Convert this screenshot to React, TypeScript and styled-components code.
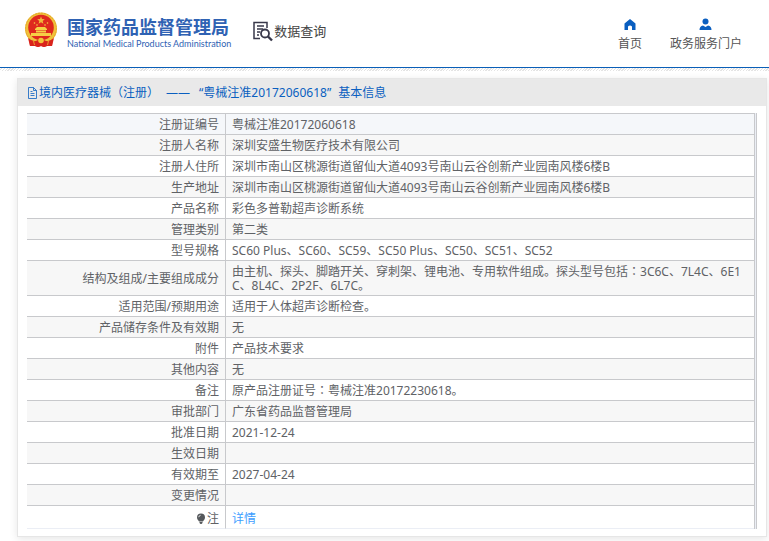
import React from "react";
import styled, { createGlobalStyle } from "styled-components";

const GlobalStyle = createGlobalStyle`
  * { box-sizing: border-box; }
  body {
    margin: 0;
    background: #fff;
    color: #606266;
    font: 12px/14px "Noto Sans", "Noto Sans CJK SC", sans-serif;
  }
`;

const Header = styled.header`
  display: flex;
  align-items: flex-start;
  height: 68px;
  padding: 12px 27px 0 23px;
  border-bottom: 1px solid #0a5fb8;
`;

const Brand = styled.a`
  display: flex;
  gap: 8px;
  color: #2f62b3;
  text-decoration: none;
`;

const BrandText = styled.span`
  display: flex;
  flex-direction: column;
  padding-top: 3px;
  white-space: nowrap;
`;

const BrandName = styled.strong`
  font: 700 18px/22px "Noto Sans CJK SC", sans-serif;
`;

const BrandSub = styled.span`
  font: 400 9px/14px Lato, sans-serif;
`;

const Query = styled.a`
  display: flex;
  align-items: center;
  margin: 8px 0 0 21px;
  color: #444;
  font-size: 13px;
  line-height: 22px;
  text-decoration: none;
  white-space: nowrap;
`;

const Nav = styled.nav`
  display: flex;
  gap: 28px;
  margin: 6px 0 0 auto;
`;

const NavItem = styled.a`
  display: flex;
  flex-direction: column;
  align-items: center;
  gap: 4px;
  color: #555;
  line-height: 18px;
  text-decoration: none;
  white-space: nowrap;
`;

const Hatch = styled.div`
  height: 3px;
  margin-bottom: 7px;
  background: repeating-linear-gradient(135deg, #fff 0 1px, #e4e4e4 1px 2px);
`;

const Panel = styled.main`
  margin: 0 2px 4px 17px;
  border: 1px solid #e6e6e6;
  box-shadow: 0 2px 8px rgba(0, 0, 0, 0.1);
`;

const Title = styled.h1`
  display: flex;
  align-items: center;
  height: 27px;
  margin: 0;
  padding: 0 9px;
  background: #e9e9e9;
  color: #0a5fc0;
  font-size: 12px;
  font-weight: 400;
  white-space: pre;
`;

const TitleParts = styled.span`
  display: flex;
  gap: 7px;
`;

const Dash = styled.span`
  flex: 0 0 26px;
`;

const TableFrame = styled.div`
  margin: 7px 9px;
  padding-right: 1px;
  border-right: 1px solid #c8c9cc;
  background: #ebeef5;
`;

const Table = styled.table`
  width: 100%;
  border-collapse: separate;
  border-spacing: 0;
  border-top: 1px solid #c8c9cc;
  border-right: 1px solid #c8c9cc;
  table-layout: fixed;
`;

const Row = styled.tr`
  background: #fff;
  &:nth-child(even) { background: #f7f7f7; }
  &:first-child { background: #f5f7fa; }
  & > * { border-bottom: 1px solid #c8c9cc; }
  &:last-child > * { height: 23px; padding-top: 5px; border-bottom-color: #ebeef5; }
`;

const Label = styled.th`
  width: 199px;
  height: 21px;
  padding: 4px 6px 2px;
  border-right: 1px solid #c8c9cc;
  font-weight: 400;
  text-align: right;
`;

const Value = styled.td`
  height: 21px;
  padding: 4px 6px 2px;
  word-break: break-all;
`;

const Centered = styled.span`
  font-family: "Noto Sans CJK TC", sans-serif;
  line-height: 0;
`;

const DetailLink = styled.a`
  color: #409eff;
  text-decoration: none;
`;

const NoteLabel = styled.span`
  display: flex;
  align-items: center;
  justify-content: flex-end;
  gap: 1px;
`;

const Emblem = () => (
  <svg width="36" height="38" viewBox="0 0 36 38" aria-hidden="true">
    <path d="M6 25h24l-1 9-5 0-3 1-3-1-3 1-3-1-5 0z" fill="#d9231c" />
    <circle cx="18" cy="16.500" r="16" fill="#f0c03a" />
    <circle cx="18" cy="16.500" r="15.400" fill="none" stroke="#dc9c25" strokeWidth="0.800" strokeDasharray="2 1" />
    <circle cx="18" cy="15.500" r="12.800" fill="#df281e" />
    <path d="M18 4.500l1 2.600 2.800.2-2.100 1.700.7 2.700-2.400-1.500-2.400 1.500.7-2.700-2.100-1.700 2.800-.2z" fill="#f0b83a" />
    <g fill="#f6cf45">
      <circle cx="11.500" cy="11" r="0.800" /><circle cx="24.500" cy="11" r="0.800" />
      <circle cx="14" cy="13" r="0.800" /><circle cx="22" cy="13" r="0.800" />
      <path d="M12 17l2-2h8l2 2v1H12zM13 18.500h10v2H13zM8 21h20v3H8z" />
    </g>
    <path d="M5 26q6 5 10 2l3-1 3 1q4 3 10-2l-2 8-5 0-3 1-3-1-3 1-3-1-5 0z" fill="#d9231c" />
    <circle cx="18" cy="28.500" r="2.800" fill="#f2c53a" />
    <path d="M10.500 29l1 4M25.500 29l-1 4" stroke="#f2b632" strokeWidth="0.800" />
  </svg>
);

const QueryIcon = () => (
  <svg width="22" height="22" viewBox="0 0 22 22" fill="none" stroke="#38384a" aria-hidden="true">
    <path d="M8 18.500H2V2.500h13V8" strokeWidth="1.500" />
    <path d="M5 6h7M5 9h6M5 12h3M5 15h2" strokeWidth="1.300" />
    <circle cx="13" cy="13.500" r="4" strokeWidth="1.800" />
    <path d="M16 16.500l4 4" strokeWidth="2.400" />
  </svg>
);

const HomeIcon = () => (
  <svg width="12" height="13" viewBox="0 0 12 13" fill="#0a5fc0" aria-hidden="true">
    <path d="M6 1L0.500 5.500V12H4V8.500q2-2 4 0V12h3.500V5.500z" />
  </svg>
);

const UserIcon = () => (
  <svg width="13" height="13" viewBox="0 0 13 13" fill="#0a5fc0" aria-hidden="true">
    <circle cx="6.500" cy="3.500" r="3" />
    <path d="M0.500 12q0-4 3.500-4.500L6.500 9 9 7.500Q12.500 8 12.500 12z" />
  </svg>
);

const DocIcon = () => (
  <svg width="12" height="12" viewBox="0 0 12 12" fill="none" stroke="#0a5fc0" aria-hidden="true">
    <path d="M1.500 0.500h5l3 3v8h-8zM6.500 0.500v3h3M3.500 4.500h2M3.500 6.500h4M3.500 8.500h4" strokeWidth="0.800" />
  </svg>
);

const BulbIcon = () => (
  <svg width="10" height="12" viewBox="0 0 10 12" fill="#55585c" aria-hidden="true">
    <path d="M5 0.500a4 4 0 0 1 4 4c0 2-1.300 2.500-2 4H3C2.300 7 1 6.500 1 4.500a4 4 0 0 1 4-4zM3.500 9h3v1L5.500 11h-1l-1-1z" />
    <path d="M2.700 4.200Q3 2.500 4.600 2.300" fill="none" stroke="#fff" strokeWidth="0.800" />
  </svg>
);

const rows: [string, React.ReactNode][] = [
  ["注册证编号", "粤械注准20172060618"],
  ["注册人名称", "深圳安盛生物医疗技术有限公司"],
  ["注册人住所", "深圳市南山区桃源街道留仙大道4093号南山云谷创新产业园南风楼6楼B"],
  ["生产地址", "深圳市南山区桃源街道留仙大道4093号南山云谷创新产业园南风楼6楼B"],
  ["产品名称", "彩色多普勒超声诊断系统"],
  ["管理类别", "第二类"],
  ["型号规格", "SC60 Plus、SC60、SC59、SC50 Plus、SC50、SC51、SC52"],
  [
    "结构及组成/主要组成成分",
    <>由主机、探头、脚踏开关、穿刺架、锂电池、专用软件组成。探头型号包括<Centered>：</Centered>3C6C、7L4C、6E1C、8L4C、2P2F、6L7C。</>,
  ],
  ["适用范围/预期用途", "适用于人体超声诊断检查。"],
  ["产品储存条件及有效期", "无"],
  ["附件", "产品技术要求"],
  ["其他内容", "无"],
  ["备注", <>原产品注册证号<Centered>：</Centered>粤械注准20172230618。</>],
  ["审批部门", "广东省药品监督管理局"],
  ["批准日期", "2021-12-24"],
  ["生效日期", ""],
  ["有效期至", "2027-04-24"],
  ["变更情况", ""],
];

export default function App() {
  return (
    <>
      <GlobalStyle />
      <Header>
        <Brand href="#">
          <Emblem />
          <BrandText>
            <BrandName>国家药品监督管理局</BrandName>
            <BrandSub>National Medical Products Administration</BrandSub>
          </BrandText>
        </Brand>
        <Query href="#query"><QueryIcon />数据查询</Query>
        <Nav>
          <NavItem href="#home"><HomeIcon />首页</NavItem>
          <NavItem href="#portal"><UserIcon />政务服务门户</NavItem>
        </Nav>
      </Header>
      <Hatch />
      <Panel>
        <Title>
          <DocIcon />
          <TitleParts>
            <span>境内医疗器械<Centered>（</Centered>注册<Centered>）</Centered></span>
            <Dash>——</Dash>
            <span>“粤械注准20172060618”</span>
            <span>基本信息</span>
          </TitleParts>
        </Title>
        <TableFrame>
          <Table>
            <tbody>
              {rows.map(([label, value]) => (
                <Row key={label}>
                  <Label scope="row">{label}</Label>
                  <Value>{value}</Value>
                </Row>
              ))}
              <Row>
                <Label scope="row"><NoteLabel><BulbIcon />注</NoteLabel></Label>
                <Value><DetailLink href="#detail">详情</DetailLink></Value>
              </Row>
            </tbody>
          </Table>
        </TableFrame>
      </Panel>
    </>
  );
}
